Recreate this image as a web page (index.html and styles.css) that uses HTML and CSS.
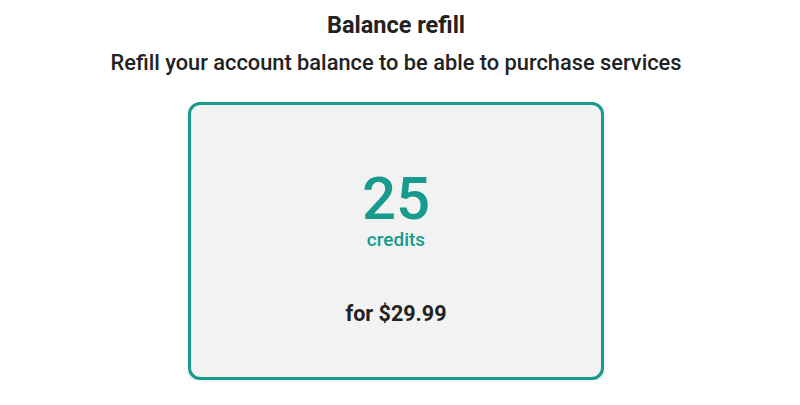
FILE: index.html
```html
<!DOCTYPE html>
<html>
<head>
<meta charset="utf-8">
<link rel="stylesheet" href="styles.css">
</head>
<body>
<main class="page">
  <h1 class="title">Balance refill</h1>
  <p class="subtitle">Refill your account balance to be able to purchase services</p>
  <div class="card">
    <div class="amount">25</div>
    <div class="unit">credits</div>
    <div class="price">for $29.99</div>
  </div>
</main>
</body>
</html>
```
FILE: styles.css
```css
html, body {
  margin: 0;
  padding: 0;
  background: #ffffff;
}
body {
  font-family: Roboto, "Liberation Sans", sans-serif;
  color: #222222;
}
.page {
  width: 792px;
  display: flex;
  flex-direction: column;
  align-items: center;
}
.title {
  margin: 11px 0 0 0;
  font-size: 23.5px;
  line-height: 28px;
  font-weight: 700;
}
.subtitle {
  margin: 10px 0 0 0;
  font-size: 21.8px;
  line-height: 28px;
  font-weight: 500;
}
.card {
  box-sizing: border-box;
  margin-top: 25px;
  width: 416px;
  height: 278px;
  border: 3px solid #169b8c;
  border-radius: 12px;
  background: #f2f2f2;
  box-shadow: 0 2px 4px rgba(0,0,0,0.12);
  display: flex;
  flex-direction: column;
  align-items: center;
}
.amount {
  margin-top: 64px;
  font-size: 60px;
  line-height: 60px;
  font-weight: 500;
  color: #169b8c;
}
.unit {
  margin-top: 0;
  font-size: 19px;
  line-height: 22px;
  font-weight: 500;
  color: #169b8c;
}
.price {
  margin-top: 49px;
  font-size: 21.5px;
  line-height: 28px;
  font-weight: 700;
}
```
